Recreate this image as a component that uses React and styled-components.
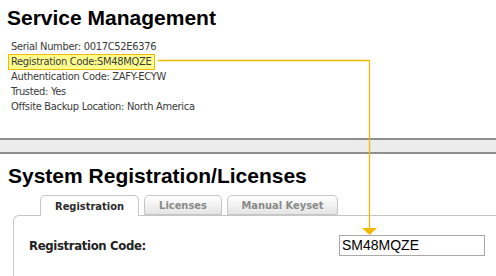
import React from "react";
import styled, { createGlobalStyle } from "styled-components";

const Global = createGlobalStyle`
  html, body { margin: 0; padding: 0; background: #fff; }
  body { font-family: "DejaVu Sans Condensed", "DejaVu Sans", sans-serif; }
`;

const Page = styled.div`
  position: relative;
  width: 496px;
  height: 276px;
  overflow: hidden;
  background: #fff;
`;

const Title = styled.h1`
  margin: 0;
  padding: ${(p) => p.$pad};
  font-family: "Liberation Sans", Arial, sans-serif;
  font-weight: 700;
  font-size: 21px;
  line-height: 24px;
  color: #000;
`;

const InfoList = styled.div`
  margin-top: 9px;
  padding-left: 11px;
  font-family: "DejaVu Sans Condensed", "DejaVu Sans", sans-serif;
  font-stretch: condensed;
  font-size: 11px;
  letter-spacing: -0.3px;
  color: #3a3a3a;
`;

const InfoLine = styled.div`
  height: 15px;
  line-height: 15px;
  white-space: nowrap;
`;

const Highlight = styled.span`
  display: inline-block;
  box-sizing: border-box;
  height: 16px;
  line-height: 14px;
  margin-left: -3px;
  padding: 0 3px 0 2px;
  border: 1px solid #f2b900;
  background: #ffff8e;
`;

const Bar = styled.div`
  margin-top: 24px;
  height: 12px;
  border-top: 2px solid #8e8e8e;
  border-bottom: 2px solid #8e8e8e;
  background: #ececec;
`;

const TabArea = styled.div`
  margin-top: 7px;
  padding-left: 13px;
`;

const TabRow = styled.div`
  display: flex;
  gap: 5px;
  padding-left: 27px;
  height: 20px;
  position: relative;
  z-index: 1;
`;

const Tab = styled.div`
  box-sizing: border-box;
  width: ${(p) => p.$w}px;
  height: ${(p) => (p.$active ? 21 : 20)}px;
  border: 1px solid #c6c6c6;
  border-bottom: ${(p) => (p.$active ? "none" : "1px solid #c6c6c6")};
  border-radius: 5px 5px 0 0;
  background: ${(p) =>
    p.$active ? "#fff" : "linear-gradient(#ffffff, #e4e4e4)"};
  display: flex;
  align-items: center;
  justify-content: center;
  font-family: "DejaVu Sans Condensed", "DejaVu Sans", sans-serif;
  font-stretch: condensed;
  font-weight: 700;
  font-size: 11px;
  color: ${(p) => (p.$active ? "#2a2a2a" : "#8a8a8a")};
`;

const Panel = styled.div`
  border-top: 1px solid #c6c6c6;
  border-left: 1px solid #c6c6c6;
  border-top-left-radius: 6px;
  height: 80px;
`;

const FormRow = styled.div`
  display: flex;
  align-items: center;
  padding: 19px 0 0 15px;
`;

const Label = styled.div`
  width: 310px;
  font-family: "DejaVu Sans Condensed", "DejaVu Sans", sans-serif;
  font-stretch: condensed;
  font-weight: 700;
  font-size: 13px;
  letter-spacing: -0.35px;
  color: #222;
`;

const Input = styled.div`
  box-sizing: border-box;
  width: 146px;
  height: 21px;
  border: 1px solid #a9a9a9;
  padding-left: 2px;
  font-family: "Liberation Sans", Arial, sans-serif;
  font-size: 14px;
  line-height: 19px;
  color: #000;
`;

const Overlay = styled.svg`
  position: absolute;
  left: 0;
  top: 0;
  pointer-events: none;
`;

export default function App() {
  return (
    <Page>
      <Global />
      <Title $pad="6px 0 0 7px">Service Management</Title>
      <InfoList>
        <InfoLine>Serial Number: 0017C52E6376</InfoLine>
        <InfoLine>
          <Highlight>Registration Code:SM48MQZE</Highlight>
        </InfoLine>
        <InfoLine>Authentication Code: ZAFY-ECYW</InfoLine>
        <InfoLine>Trusted: Yes</InfoLine>
        <InfoLine>Offsite Backup Location: North America</InfoLine>
      </InfoList>
      <Bar />
      <Title $pad="10px 0 0 8px">System Registration/Licenses</Title>
      <TabArea>
        <TabRow>
          <Tab $active $w={99}>Registration</Tab>
          <Tab $w={78}>Licenses</Tab>
          <Tab $w={111}>Manual Keyset</Tab>
        </TabRow>
        <Panel>
          <FormRow>
            <Label>Registration Code:</Label>
            <Input>SM48MQZE</Input>
          </FormRow>
        </Panel>
      </TabArea>
      <Overlay width="496" height="276" viewBox="0 0 496 276">
        <polyline
          points="158,60.5 369.5,60.5 369.5,229"
          fill="none"
          stroke="#f5b800"
          strokeWidth="1.3"
        />
        <polygon points="362,228 377,228 369.5,235" fill="#f5b800" />
      </Overlay>
    </Page>
  );
}
